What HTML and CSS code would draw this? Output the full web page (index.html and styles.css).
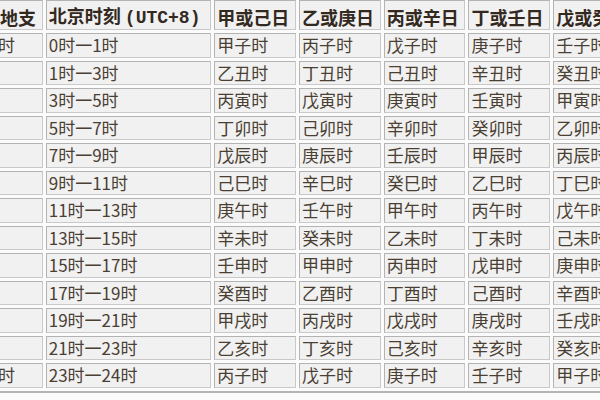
FILE: index.html
```html
<!DOCTYPE html>
<html lang="zh">
<head>
<meta charset="utf-8">
<link rel="stylesheet" href="styles.css">
</head>
<body>
<table class="shichen">
  <colgroup>
    <col class="c-zhi">
    <col class="c-time">
    <col class="c-day"><col class="c-day"><col class="c-day"><col class="c-day"><col class="c-day">
  </colgroup>
  <thead>
    <tr class="head">
      <th>时辰地支</th>
      <th>北京时刻 <span class="utc">(UTC+8)</span></th>
      <th>甲或己日</th>
      <th>乙或庚日</th>
      <th>丙或辛日</th>
      <th>丁或壬日</th>
      <th>戊或癸日</th>
    </tr>
  </thead>
  <tbody>
    <tr><td>早子时</td><td>0时一1时</td><td>甲子时</td><td>丙子时</td><td>戊子时</td><td>庚子时</td><td>壬子时</td></tr>
    <tr><td>丑时</td><td>1时一3时</td><td>乙丑时</td><td>丁丑时</td><td>己丑时</td><td>辛丑时</td><td>癸丑时</td></tr>
    <tr><td>寅时</td><td>3时一5时</td><td>丙寅时</td><td>戊寅时</td><td>庚寅时</td><td>壬寅时</td><td>甲寅时</td></tr>
    <tr><td>卯时</td><td>5时一7时</td><td>丁卯时</td><td>己卯时</td><td>辛卯时</td><td>癸卯时</td><td>乙卯时</td></tr>
    <tr><td>辰时</td><td>7时一9时</td><td>戊辰时</td><td>庚辰时</td><td>壬辰时</td><td>甲辰时</td><td>丙辰时</td></tr>
    <tr><td>巳时</td><td>9时一11时</td><td>己巳时</td><td>辛巳时</td><td>癸巳时</td><td>乙巳时</td><td>丁巳时</td></tr>
    <tr><td>午时</td><td>11时一13时</td><td>庚午时</td><td>壬午时</td><td>甲午时</td><td>丙午时</td><td>戊午时</td></tr>
    <tr><td>未时</td><td>13时一15时</td><td>辛未时</td><td>癸未时</td><td>乙未时</td><td>丁未时</td><td>己未时</td></tr>
    <tr><td>申时</td><td>15时一17时</td><td>壬申时</td><td>甲申时</td><td>丙申时</td><td>戊申时</td><td>庚申时</td></tr>
    <tr><td>酉时</td><td>17时一19时</td><td>癸酉时</td><td>乙酉时</td><td>丁酉时</td><td>己酉时</td><td>辛酉时</td></tr>
    <tr><td>戌时</td><td>19时一21时</td><td>甲戌时</td><td>丙戌时</td><td>戊戌时</td><td>庚戌时</td><td>壬戌时</td></tr>
    <tr><td>亥时</td><td>21时一23时</td><td>乙亥时</td><td>丁亥时</td><td>己亥时</td><td>辛亥时</td><td>癸亥时</td></tr>
    <tr><td>晚子时</td><td>23时一24时</td><td>丙子时</td><td>戊子时</td><td>庚子时</td><td>壬子时</td><td>甲子时</td></tr>
  </tbody>
</table>
</body>
</html>
```

FILE: styles.css
```css
html, body {
  margin: 0;
  padding: 0;
  background: #fbfbfb;
  overflow: hidden;
}

.shichen {
  table-layout: fixed;
  border-collapse: separate;
  border-spacing: 3px;
  width: 682px;
  margin: -4px 0 0 -43px;
  border: 1px solid #d8d8d8;
  border-bottom: 2px solid #b4b4b4;
  font-family: "Noto Sans CJK SC", "Noto Sans", sans-serif;
  color: #4a3f33;
  background: #fbfbfb;
}

.c-zhi { width: 81px; }
.c-time { width: 164px; }
.c-day { width: 81px; }

.shichen th,
.shichen td {
  box-sizing: border-box;
  padding: 0 2px;
  text-align: left;
  white-space: nowrap;
  overflow: hidden;
  background: #f1f1f1;
  border: 1px solid #c9c9c9;
  border-top-color: #b3b3b3;
  border-left-color: #b3b3b3;
}

.shichen th {
  height: 27px;
  padding-top: 3px;
  font-size: 18px;
  font-weight: 700;
  line-height: 22px;
  color: #33291f;
}

.shichen td {
  height: 24.5px;
  font-size: 17px;
  font-weight: 400;
  line-height: 20px;
}

.utc {
  font-family: "Liberation Mono", monospace;
  font-weight: 700;
  font-size: 18px;
}
```
